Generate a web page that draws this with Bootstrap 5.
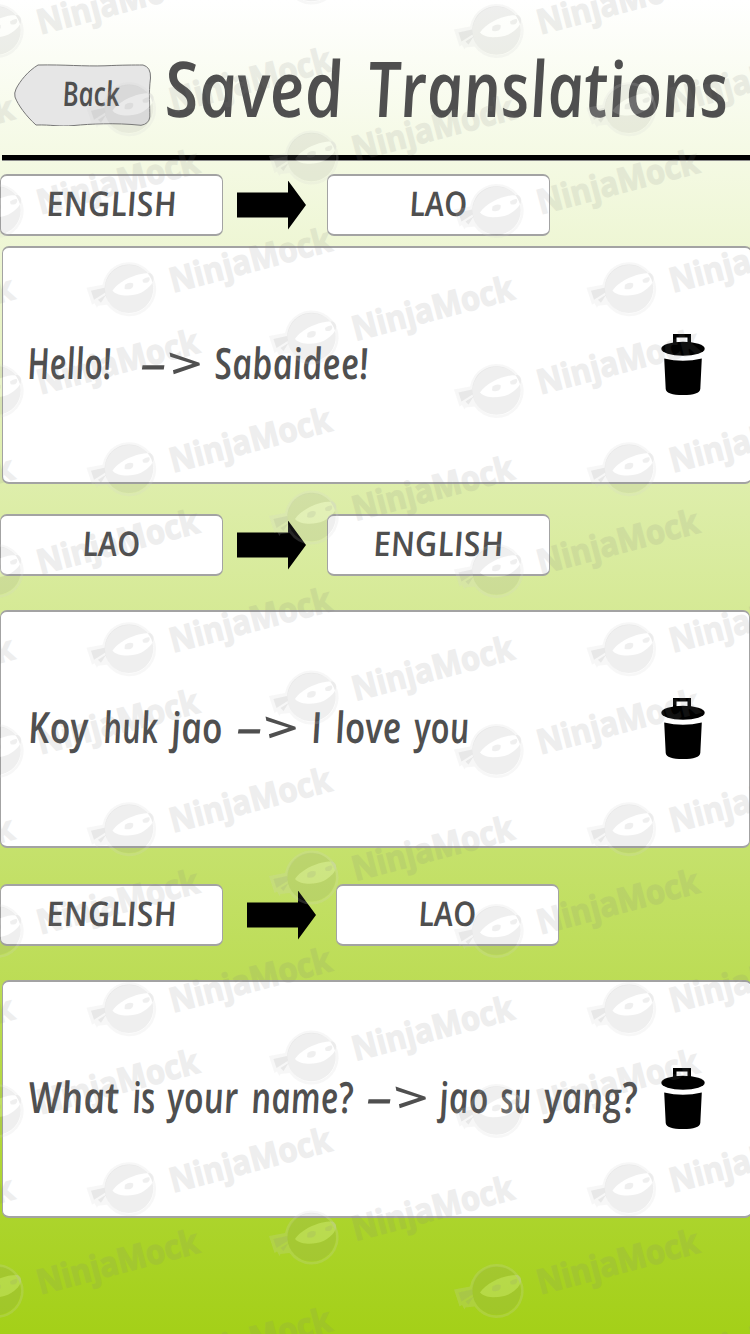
<!DOCTYPE html>
<html lang="en">
<head>
<meta charset="utf-8">
<meta name="viewport" content="width=device-width, initial-scale=1">
<title>Saved Translations</title>
<link href="https://cdn.jsdelivr.net/npm/bootstrap@5.3.0/dist/css/bootstrap.min.css" rel="stylesheet">
<style>
  body { background: #fff; color: #4f4f4f; font-family: "Open Sans", "Noto Sans", sans-serif; }
  .screen { width: 750px; height: 1334px; background: linear-gradient(#fff, #a4d018); }
  .topbar { height: 155px; padding: 58px 0 0 14px; }
  .rule { height: 5px; margin-left: 2px; background: #000; box-shadow: 0 1px 0 #8a8a8a; }
  .line { font-style: italic; line-height: 1; white-space: nowrap; }
  .word { display: block; flex: none; }
  .word > span { display: inline-block; transform-origin: 0 77%; }
  .title { font-size: 77px; font-weight: 600; height: 78px; margin-left: 14px; margin-top: -9px; }
  .back { width: 138px; height: 62px; margin-top: 6px; }
  .back svg { width: 138px; height: 62px; }
  .back .line { position: absolute; left: 49px; top: 12px; font-size: 34px; font-weight: 600; }
  .langs { height: 62px; }
  .lang, .phrase { background: #fff; border: solid #a3a3a3; border-width: 2px 1px; border-radius: 7px; }
  .lang { width: 223px; height: 62px; }
  .lang .line { font-size: 34px; font-weight: 600; margin-top: -5px; }
  .arrow { width: 70px; height: 49px; margin: 0 20px 0 14px; }
  .langs.wide .arrow { margin: 0 19px 0 24px; }
  .phrase { width: 750px; height: 238px; }
  .phrase.shifted { margin-left: 2px; }
  .phrase .line { font-size: 43px; font-weight: 600; margin-top: -6px; width: 640px; }
  .trash { width: 46px; height: 62px; margin-left: 19px; }
  .phrase.shifted .trash { margin-left: 17px; }
  .watermark { pointer-events: none; }
</style>
</head>
<body>
<main class="screen position-relative overflow-hidden d-flex flex-column">

  <header class="topbar d-flex align-items-start flex-shrink-0">
    <a class="back position-relative flex-shrink-0 text-reset text-decoration-none" href="#">
      <svg class="d-block" viewBox="0 0 138 62" aria-hidden="true">
        <path d="M24 1C50 .5 70 2.500 91 1.800C108 1 120 1 129 1Q137 3 136.500 14C134.500 30 136 42 135.800 53Q135 60 127 61.300C100 58.500 76 60 60 61.500C44 63 38 60.500 22 61C12 52 4 41 1 33Q0 29 2 25C6 17 14 7 24 1Z" fill="#e6e6e6" stroke="#777" stroke-width="1"/>
      </svg>
      <span class="line d-flex"><span class="word" data-w="57"><span>Back</span></span></span>
    </a>
    <h1 class="title line d-flex mb-0">
      <span class="word" data-w="179"><span>Saved</span></span>
      <span class="word" data-w="361" data-gap="24"><span>Translations</span></span>
    </h1>
  </header>
  <div class="rule flex-shrink-0"></div>

  <div class="langs d-flex align-items-center flex-shrink-0" style="margin-top:14px">
    <div class="lang d-flex align-items-center justify-content-center"><div class="line d-flex"><span class="word" data-w="130"><span>ENGLISH</span></span></div></div>
    <svg class="arrow" viewBox="0.500 0.500 70 49"><path d="M0 12H51.500V0L69.500 24.500L51.500 49V37H0Z"/></svg>
    <div class="lang d-flex align-items-center justify-content-center"><div class="line d-flex"><span class="word" data-w="58"><span>LAO</span></span></div></div>
  </div>

  <section class="phrase shifted d-flex align-items-center flex-shrink-0" style="margin-top:10px">
    <div class="line d-flex">
      <span class="word" data-w="84" data-gap="25"><span>Hello!</span></span>
      <span class="word" data-w="29" data-gap="29"><span>-</span></span><span class="word" data-w="34"><span>&gt;</span></span>
      <span class="word" data-w="154" data-gap="11"><span>Sabaidee!</span></span>
    </div>
    <svg class="trash" viewBox="0 0 46 62"><use href="#bin"/></svg>
  </section>

  <div class="langs d-flex align-items-center flex-shrink-0" style="margin-top:30px">
    <div class="lang d-flex align-items-center justify-content-center"><div class="line d-flex"><span class="word" data-w="58"><span>LAO</span></span></div></div>
    <svg class="arrow" viewBox="0.500 0.500 70 49"><path d="M0 12H51.500V0L69.500 24.500L51.500 49V37H0Z"/></svg>
    <div class="lang d-flex align-items-center justify-content-center"><div class="line d-flex"><span class="word" data-w="130"><span>ENGLISH</span></span></div></div>
  </div>

  <section class="phrase d-flex align-items-center flex-shrink-0" style="margin-top:34px">
    <div class="line d-flex">
      <span class="word" data-w="60" data-gap="28"><span>Koy</span></span>
      <span class="word" data-w="55" data-gap="15"><span>huk</span></span>
      <span class="word" data-w="51" data-gap="13"><span>jao</span></span>
      <span class="word" data-w="29" data-gap="14"><span>-</span></span><span class="word" data-w="34"><span>&gt;</span></span>
      <span class="word" data-w="11" data-gap="12"><span>I</span></span>
      <span class="word" data-w="66" data-gap="13"><span>love</span></span>
      <span class="word" data-w="55" data-gap="13"><span>you</span></span>
    </div>
    <svg class="trash" viewBox="0 0 46 62"><use href="#bin"/></svg>
  </section>

  <div class="langs wide d-flex align-items-center flex-shrink-0" style="margin-top:36px">
    <div class="lang d-flex align-items-center justify-content-center"><div class="line d-flex"><span class="word" data-w="130"><span>ENGLISH</span></span></div></div>
    <svg class="arrow" viewBox="0.500 0.500 70 49"><path d="M0 12H51.500V0L69.500 24.500L51.500 49V37H0Z"/></svg>
    <div class="lang d-flex align-items-center justify-content-center"><div class="line d-flex"><span class="word" data-w="58"><span>LAO</span></span></div></div>
  </div>

  <section class="phrase shifted d-flex align-items-center flex-shrink-0" style="margin-top:34px">
    <div class="line d-flex">
      <span class="word" data-w="91" data-gap="26"><span>What</span></span>
      <span class="word" data-w="23" data-gap="13"><span>is</span></span>
      <span class="word" data-w="71" data-gap="12"><span>your</span></span>
      <span class="word" data-w="102" data-gap="13"><span>name?</span></span>
      <span class="word" data-w="29" data-gap="13"><span>-</span></span><span class="word" data-w="34"><span>&gt;</span></span>
      <span class="word" data-w="49" data-gap="10"><span>jao</span></span>
      <span class="word" data-w="31" data-gap="12"><span>su</span></span>
      <span class="word" data-w="93" data-gap="13"><span>yang?</span></span>
    </div>
    <svg class="trash" viewBox="0 0 46 62"><use href="#bin"/></svg>
  </section>

  <svg class="watermark position-absolute top-0 start-0" width="750" height="1334" viewBox="0 0 750 1334" aria-hidden="true">
    <defs>
      <g id="bin">
        <path fill-rule="evenodd" d="M13 0H31V10H13ZM16.500 3.500V8.500H27.500V3.500Z"/>
        <ellipse cx="23" cy="14.800" rx="21.700" ry="7"/>
        <path d="M4.200 24.500Q23 29 41.800 24.500L40.300 55Q39.500 61 23 61T5.700 55Z"/>
      </g>
      <g id="ninja">
        <path fill="#d4d4d4" fill-opacity=".18" fill-rule="evenodd" d="M-26.500 -4A27 27 0 1 1 -22 16L-31 17L-32 19L-34.500 14.500L-37 16L-42.500 -1L-26.500 -4ZM-24 1A24.300 24.300 0 1 0 24.600 0A24.300 24.300 0 1 0 -24 1Z"/>
        <path fill="#808080" fill-opacity=".13" fill-rule="evenodd" d="M0 -24.300A24.300 24.300 0 1 1 -.1 -24.300ZM-16.500 2C-10 -8 8 -16 21 -15.500C28 -13 25 -3 12 4C3 8 -11 8 -16.500 2Z"/>
        <path fill="#fff" fill-opacity=".18" d="M-16.500 2C-10 -8 8 -16 21 -15.500C28 -13 25 -3 12 4C3 8 -11 8 -16.500 2Z"/>
        <path fill="#808080" fill-opacity=".13" d="M-4 -4Q0 -7 4 -5.500Q5 -2 2 0Q-2 1.300 -4.500 0ZM13.500 -9Q17 -12 20 -11.500Q22 -9 19 -6.500Q16 -5.500 14 -6.500ZM-38 2L-24.500 -1L-24 4L-35 11ZM-31 11L-23 6L-28 14Z"/>
        <text opacity=".13" transform="translate(44 4) rotate(-14.800)" textLength="166" lengthAdjust="spacingAndGlyphs" font-family="Open Sans, sans-serif" font-weight="700" font-size="34" fill="#808080" stroke="#808080" stroke-width="1.300">NinjaMock</text>
      </g>
      <g id="trio">
        <use href="#ninja" x="129" y="108.700"/>
        <use href="#ninja" x="311.500" y="157"/>
        <use href="#ninja" x="-3.500" y="30.500"/>
      </g>
      <g id="column">
        <use href="#trio" y="-180"/><use href="#trio"/><use href="#trio" y="180"/><use href="#trio" y="360"/>
        <use href="#trio" y="540"/><use href="#trio" y="720"/><use href="#trio" y="900"/><use href="#trio" y="1080"/><use href="#trio" y="1260"/>
      </g>
    </defs>
    <use href="#column" x="-500"/><use href="#column"/><use href="#column" x="500"/>
  </svg>
</main>
<script src="https://cdn.jsdelivr.net/npm/bootstrap@5.3.0/dist/js/bootstrap.bundle.min.js"></script>
<script>
  // Condense each word to its lettering width and straighten the italic forms.
  document.querySelectorAll('.word').forEach(function (word) {
    var ink = word.firstElementChild, w = +word.dataset.w;
    var scale = w / ink.offsetWidth;
    word.style.width = w + 'px';
    word.style.marginLeft = (word.dataset.gap || 0) + 'px';
    ink.style.transform = 'scaleX(' + scale.toFixed(3) + ') skewX(8deg)';
  });
</script>
</body>
</html>
